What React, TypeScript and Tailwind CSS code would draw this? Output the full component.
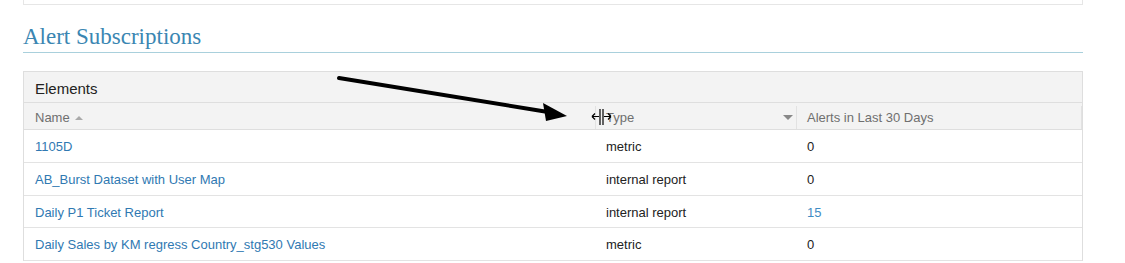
const rows = [
  { name: "1105D", type: "metric", alerts: "0", link: false },
  { name: "AB_Burst Dataset with User Map", type: "internal report", alerts: "0", link: false },
  { name: "Daily P1 Ticket Report", type: "internal report", alerts: "15", link: true },
  { name: "Daily Sales by KM regress Country_stg530 Values", type: "metric", alerts: "0", link: false },
];

// Annotation arrow drawn over the table
function Pointer() {
  return (
    <svg
      className="pointer-events-none absolute left-0 top-0"
      width="1125"
      height="263"
      viewBox="0 0 1125 263"
    >
      <line x1="339" y1="78" x2="548" y2="112" stroke="#000" strokeWidth="4" strokeLinecap="round" />
      <polygon points="567,116 543,103 546,121" fill="#000" />
    </svg>
  );
}

// Column-resize mouse cursor
function ResizeCursor() {
  return (
    <svg
      className="pointer-events-none absolute left-[590px] top-[108px]"
      width="24"
      height="18"
      viewBox="0 0 24 18"
    >
      <path d="M2 8.5h7M2 8.5l3-3M2 8.5l3 3" stroke="#000" strokeWidth="1.2" fill="none" />
      <path d="M10 1v16M13 1v16" stroke="#000" strokeWidth="1.2" fill="none" />
      <path d="M14 8.5h7M21 8.5l-3-3M21 8.5l-3 3" stroke="#000" strokeWidth="1.2" fill="none" />
    </svg>
  );
}

export default function App() {
  return (
    <div className="relative h-[263px] w-[1125px] overflow-hidden bg-white font-['Liberation_Sans',Arial,sans-serif]">
      <div className="ml-[23px] w-[1060px]">
        <div className="h-[5px] border-x border-b border-[#e6e6e6]" />

        <h2 className="mt-[19px] border-b border-[#a9d0dc] pb-[3px] font-['Liberation_Serif',serif] text-[23px] leading-[25px] text-[#3a86b2]">
          Alert Subscriptions
        </h2>

        <div className="mt-[18px] border border-b-0 border-[#dedede]">
          <div className="flex h-[31px] items-center border-b border-[#dedede] bg-[#f3f3f3] px-[11px] pt-[4px] text-[15px] text-[#222]">
            Elements
          </div>

          <div className="flex h-[27px] border-b border-[#dedede] bg-[#f3f3f3] pt-[3px] text-[13px] text-[#6f6f6f]">
            <div className="flex w-[571px] items-center gap-[5px] px-[11px]">
              <span>Name</span>
              <span className="mt-[1px] h-0 w-0 border-x-[4px] border-b-[4px] border-x-transparent border-b-[#aaa]" />
            </div>
            <div className="flex w-[201px] items-center justify-between border-l border-[#e2e2e2] pl-[10px] pr-[3px]">
              <span>Type</span>
              <span className="h-0 w-0 border-x-[5px] border-t-[5px] border-x-transparent border-t-[#888]" />
            </div>
            <div className="flex flex-1 items-center border-x border-[#e2e2e2] px-[10px]">
              Alerts in Last 30 Days
            </div>
          </div>

          {rows.map((r) => (
            <div key={r.name} className="flex h-[32.75px] border-b border-[#e3e3e3] bg-white pt-[2px] text-[13px] text-[#222]">
              <div className="flex w-[571px] items-center px-[11px] text-[#3079b2]">{r.name}</div>
              <div className="flex w-[201px] items-center pl-[11px]">{r.type}</div>
              <div className={`flex flex-1 items-center px-[11px] ${r.link ? "text-[#3f8cc4]" : ""}`}>{r.alerts}</div>
            </div>
          ))}
        </div>
      </div>

      <Pointer />
      <ResizeCursor />
    </div>
  );
}
